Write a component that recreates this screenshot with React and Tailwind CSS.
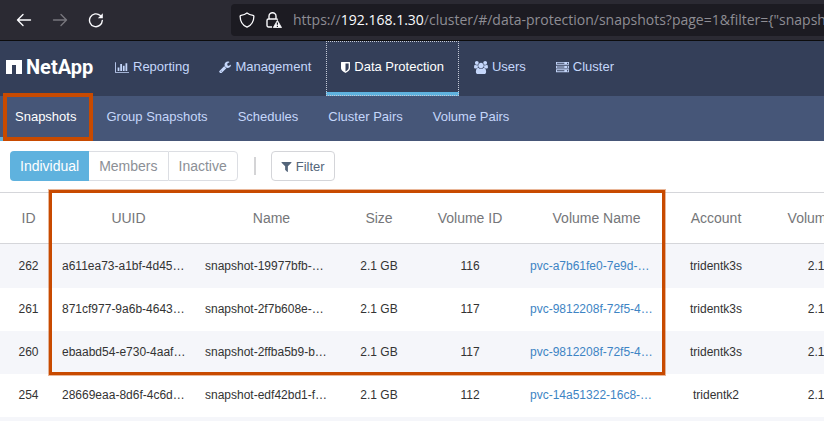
import React from 'react';

const FA_ICONS = {
  chart: {
    box: '0 0 2048 1792',
    size: 'w-[14px] h-[13px]',
    d: 'M640 896v512h-256v-512h256zm384-512v1024h-256v-1024h256zm1024 1152v128h-2048v-1536h128v1408h1920zm-640-896v768h-256v-768h256zm384-384v1152h-256v-1152h256z',
  },
  wrench: {
    box: '64 64 1664 1664',
    size: 'w-[12px] h-[12px]',
    d: 'M448 1472q0-26-19-45t-45-19-45 19-19 45 19 45 45 19 45-19 19-45zm644-420l-682 682q-37 37-90 37-52 0-91-37l-106-108q-38-36-38-90 0-53 38-91l681-681q39 98 114.5 173.5t173.5 114.5zm634-435q0 39-23 106-47 134-164.5 217.5t-258.5 83.5q-185 0-316.5-131.5t-131.5-316.5 131.5-316.5 316.5-131.5q58 0 121.5 16.5t107.5 46.5q16 11 16 28t-16 28l-293 169v224l193 107q5-3 79-48.5t135.5-81 70.5-35.500q15 0 23.5 10t8.500 25z',
  },
  shield: {
    box: '256 0 1280 1792',
    size: 'w-[9px] h-[13px]',
    d: 'M1344 960v-640h-448v1137q119-63 213-137 235-184 235-360zm192-768v768q0 86-33.5 170.5t-83 150-118 127.500-126.5 103-121 77.500-89.500 49.500-42.500 20q-12 6-26 6t-26-6q-16-7-42.500-20t-89.500-49.500-121-77.500-126.500-103-118-127.500-83-150-33.500-170.500v-768q0-26 19-45t45-19h1152q26 0 45 19t19 45z',
  },
  users: {
    box: '0 0 1920 1792',
    size: 'w-[14px] h-[13px]',
    d: 'M593 896q-162 5-265 128h-134q-82 0-138-40.500t-56-118.500q0-353 124-353 6 0 43.500 21t97.500 42.500 119 21.500q67 0 133-23-5 37-5 66 0 139 81 256zm1071 637q0 120-73 189.500t-194 69.500h-874q-121 0-194-69.500t-73-189.500q0-53 3.500-103.500t14-109 26.500-108.500 43-97.500 62-81 85.500-53.500 111.500-20q10 0 43 21.500t73 48 107 48 135 21.500 135-21.500 107-48 73-48 43-21.500q61 0 111.500 20t85.500 53.500 62 81 43 97.500 26.500 108.500 14 109 3.500 103.500zm-1024-1277q0 106-75 181t-181 75-181-75-75-181 75-181 181-75 181 75 75 181zm704 384q0 159-112.500 271.500t-271.500 112.500-271.500-112.500-112.500-271.500 112.500-271.500 271.500-112.500 271.500 112.500 112.500 271.500zm576 225q0 78-56 118.500t-138 40.500h-134q-103-123-265-128 81-117 81-256 0-29-5-66 66 23 133 23 59 0 119-21.500t97.500-42.500 43.500-21q124 0 124 353zm-128-609q0 106-75 181t-181 75-181-75-75-181 75-181 181-75 181 75 75 181z',
  },
  server: {
    box: '0 0 1792 1792',
    size: 'w-[13px] h-[13px]',
    d: 'M128 1408h1024v-128h-1024v128zm0-512h1024v-128h-1024v128zm1568 448q0-40-28-68t-68-28-68 28-28 68 28 68 68 28 68-28 28-68zm-1568-960h1024v-128h-1024v128zm1568 448q0-40-28-68t-68-28-68 28-28 68 28 68 68 28 68-28 28-68zm0-512q0-40-28-68t-68-28-68 28-28 68 28 68 68 28 68-28 28-68zm96 832v384h-1792v-384h1792zm0-512v384h-1792v-384h1792zm0-512v384h-1792v-384h1792z',
  },
  filter: {
    box: '192 128 1408 1536',
    size: 'w-[11px] h-[11px]',
    d: 'M1595 295q17 41-14 70l-493 493v742q0 42-39 59-13 5-25 5-27 0-45-19l-256-256q-19-19-19-45v-486l-493-493q-31-29-14-70 17-39 59-39h1280q42 0 59 39z',
  },
};

function Icon({ name }) {
  const icon = FA_ICONS[name];
  return (
    <svg viewBox={icon.box} className={`${icon.size} shrink-0`} fill="currentColor" aria-hidden="true">
      <path d={icon.d} />
    </svg>
  );
}

function BrowserBar() {
  return (
    <div className="flex h-[41px] items-center border-b border-[#0c0c0d] bg-[#2b2a33] pl-4 text-[#fbfbfe]">
      <div className="flex w-[215px] shrink-0 items-center gap-5">
        <button type="button" aria-label="Back" className="h-4 w-4">
          <svg viewBox="0 0 16 16" className="h-4 w-4" fill="none" stroke="currentColor" strokeWidth="1.4" strokeLinecap="round" strokeLinejoin="round">
            <path d="M14.500 8H1.500M7 2.500L1.500 8 7 13.500" />
          </svg>
        </button>
        <button type="button" aria-label="Forward" disabled className="h-4 w-4 text-[#77767d]">
          <svg viewBox="0 0 16 16" className="h-4 w-4" fill="none" stroke="currentColor" strokeWidth="1.4" strokeLinecap="round" strokeLinejoin="round">
            <path d="M1.500 8h13M9 2.500L14.500 8 9 13.500" />
          </svg>
        </button>
        <button type="button" aria-label="Reload" className="h-4 w-4">
          <svg viewBox="0 0 16 16" className="h-4 w-4" fill="none" stroke="currentColor" strokeWidth="1.4" strokeLinecap="round">
            <path d="M14.300 8.500A6.400 6.400 0 1 1 12.300 3.600" />
            <path d="M14.800 1.300V6.300H9.800z" fill="currentColor" stroke="none" />
          </svg>
        </button>
      </div>
      <div className="flex h-8 min-w-0 flex-1 items-center overflow-hidden rounded-l bg-[#1c1b22] pl-2">
        <svg viewBox="0 0 16 16" className="h-4 w-4 shrink-0" fill="none" stroke="currentColor" strokeWidth="1.3" strokeLinejoin="round" aria-hidden="true">
          <path d="M8 .9C6.200 2.400 4 3 2 3.300c-.6.1-.9.4-.9.900.1 5.300 2.600 9.100 6.900 11 4.300-1.900 6.800-5.700 6.900-11 0-.5-.3-.8-.9-.9C12 3 9.800 2.400 8 .9z" />
        </svg>
        <svg viewBox="0 0 16 16" className="ml-[11px] h-4 w-4 shrink-0" fill="none" stroke="currentColor" strokeWidth="1.4" aria-hidden="true">
          <path d="M3 7V4.200a3.500 3.500 0 0 1 7 0V7M6 15H2.500A1.500 1.500 0 0 1 1 13.500v-5A1.500 1.500 0 0 1 2.500 7h8a1.500 1.500 0 0 1 1.200.6" />
          <path d="M11.400 8.400l4.100 7.100H7.300z" fill="currentColor" stroke="currentColor" strokeWidth=".8" strokeLinejoin="round" />
          <path d="M11.400 10.400v2.400M11.400 13.700v1.200" stroke="#1c1b22" strokeWidth="1.200" />
        </svg>
        <div
          role="textbox"
          aria-label="Address"
          className="ml-[11px] whitespace-nowrap font-['Open_Sans',sans-serif] text-[14px] leading-5 text-[#8e8d94]"
        >
          https://<span className="text-[#fbfbfe]">192.168.1.30</span>
          /cluster/#/data-protection/snapshots?page=1&amp;filter=&#123;"snapsho
        </div>
      </div>
    </div>
  );
}

const MAIN_TABS = [
  { label: 'Reporting', icon: 'chart' },
  { label: 'Management', icon: 'wrench' },
  { label: 'Data Protection', icon: 'shield', active: true },
  { label: 'Users', icon: 'users' },
  { label: 'Cluster', icon: 'server' },
];

function MainNav() {
  return (
    <header className="flex h-[55px] items-stretch bg-[#343f59] text-[13px] text-[#c5d7fb]">
      <a href="#home" className="flex w-[100px] shrink-0 items-center gap-1 pb-[3px] pl-[6px] text-white">
        <svg viewBox="0 0 16 14" className="h-[14px] w-4 shrink-0" fill="currentColor" aria-hidden="true">
          <path d="M0 0h16v14h-6V5H6v9H0z" />
        </svg>
        <span className="font-[Roboto,sans-serif] text-[20px] font-bold leading-5">NetApp</span>
      </a>
      <nav className="flex items-stretch">
        {MAIN_TABS.map((tab) => (
          <a
            key={tab.label}
            href="#tab"
            className={
              tab.active
                ? 'flex items-center gap-1 whitespace-nowrap border-b-4 border-[#5fb2de] px-[15px] pt-px text-white outline-1 -outline-offset-1 outline-dotted outline-[#c5cad6]'
                : 'flex items-center gap-1 whitespace-nowrap border-b-4 border-transparent px-[15px] pt-px'
            }
          >
            <Icon name={tab.icon} />
            {tab.label}
          </a>
        ))}
      </nav>
    </header>
  );
}

const SUB_TABS = ['Snapshots', 'Group Snapshots', 'Schedules', 'Cluster Pairs', 'Volume Pairs'];

function SubNav() {
  return (
    <nav className="flex h-[45px] items-stretch bg-[#465678] text-[13px] text-[#c5d7fb]">
      {SUB_TABS.map((label, i) => (
        <a
          key={label}
          href="#subtab"
          className={
            i === 0
              ? 'relative flex items-center whitespace-nowrap border-b-4 border-[#5fb2de] px-[15px] text-white'
              : 'flex items-center whitespace-nowrap border-b-4 border-transparent px-[15px]'
          }
        >
          {label}
          {i === 0 && <span className="absolute -right-[2px] -top-[3px] bottom-[-4px] left-[3px] border-4 border-[#c84a00]" />}
        </a>
      ))}
    </nav>
  );
}

function Toolbar() {
  return (
    <div className="flex h-[51px] items-start bg-white px-[10px] pt-[10px]">
      <div className="flex h-[30px] text-[14px] text-[#8c8f96]">
        <button type="button" className="rounded-l bg-[#5fb2de] px-[10px] text-white">Individual</button>
        <button type="button" className="border-y border-[#dcdee3] px-[10px]">Members</button>
        <button type="button" className="rounded-r border border-[#dcdee3] px-[10px]">Inactive</button>
      </div>
      <div className="ml-4 mr-[15px] mt-[6px] h-[18px] w-[2px] bg-[#d4d4d6]" />
      <button type="button" className="flex h-[30px] items-center gap-1 rounded border border-[#d4d5d9] px-[9px] pt-px text-[13px] text-[#54657a]">
        <Icon name="filter" />
        Filter
      </button>
    </div>
  );
}

const ROWS = [
  ['262', 'a611ea73-a1bf-4d45…', 'snapshot-19977bfb-…', '2.1 GB', '116', 'pvc-a7b61fe0-7e9d-…', 'tridentk3s', '2.1 GB'],
  ['261', '871cf977-9a6b-4643…', 'snapshot-2f7b608e-…', '2.1 GB', '117', 'pvc-9812208f-72f5-4…', 'tridentk3s', '2.1 GB'],
  ['260', 'ebaabd54-e730-4aaf…', 'snapshot-2ffba5b9-b…', '2.1 GB', '117', 'pvc-9812208f-72f5-4…', 'tridentk3s', '2.1 GB'],
  ['254', '28669eaa-8d6f-4c6d…', 'snapshot-edf42bd1-f…', '2.1 GB', '112', 'pvc-14a51322-16c8-…', 'tridentk2', '2.1 GB'],
];

const HEADINGS = ['ID', 'UUID', 'Name', 'Size', 'Volume ID', 'Volume Name', 'Account', 'Volume Size'];

function SnapshotTable() {
  return (
    <div className="relative">
      <div className="overflow-hidden">
        <table className="w-full min-w-[889px] table-fixed border-collapse text-center text-[12px] text-[#333]">
          <colgroup>
            <col className="w-[57px]" />
            <col className="w-[143px]" />
            <col className="w-[143px]" />
            <col className="w-[72px]" />
            <col className="w-[110px]" />
            <col className="w-[143px]" />
            <col className="w-[96px]" />
            <col />
          </colgroup>
          <thead>
            <tr className="h-[51px] border-y border-[#d5d6da] text-[14px] text-[#757679]">
              {HEADINGS.map((heading) => (
                <th key={heading} scope="col" className="px-[5px] font-normal">{heading}</th>
              ))}
            </tr>
          </thead>
          <tbody>
            {ROWS.map((row) => (
              <tr key={row[0]} className="h-[43px] first:h-[44px] odd:bg-[#f5f6fa]">
                {row.map((value, i) => (
                  <td key={HEADINGS[i]} className={i === 1 || i === 2 || i === 5 ? 'truncate px-[5px] text-left' : 'px-[5px]'}>
                    {i === 5 ? <a href="#volume" className="text-[#3d84c4]">{value}</a> : value}
                  </td>
                ))}
              </tr>
            ))}
            <tr className="h-[43px] bg-[#f5f6fa]">
              <td colSpan={8} />
            </tr>
          </tbody>
        </table>
      </div>
      <div className="pointer-events-none absolute -top-[2px] left-[49px] h-[185px] w-[616px] border-3 border-[#c84a00] outline-1 outline-[#c84a00]/40" />
    </div>
  );
}

export default function App() {
  return (
    <div className="h-screen overflow-hidden bg-white font-['Liberation_Sans',Arial,sans-serif]">
      <BrowserBar />
      <MainNav />
      <SubNav />
      <Toolbar />
      <SnapshotTable />
    </div>
  );
}
